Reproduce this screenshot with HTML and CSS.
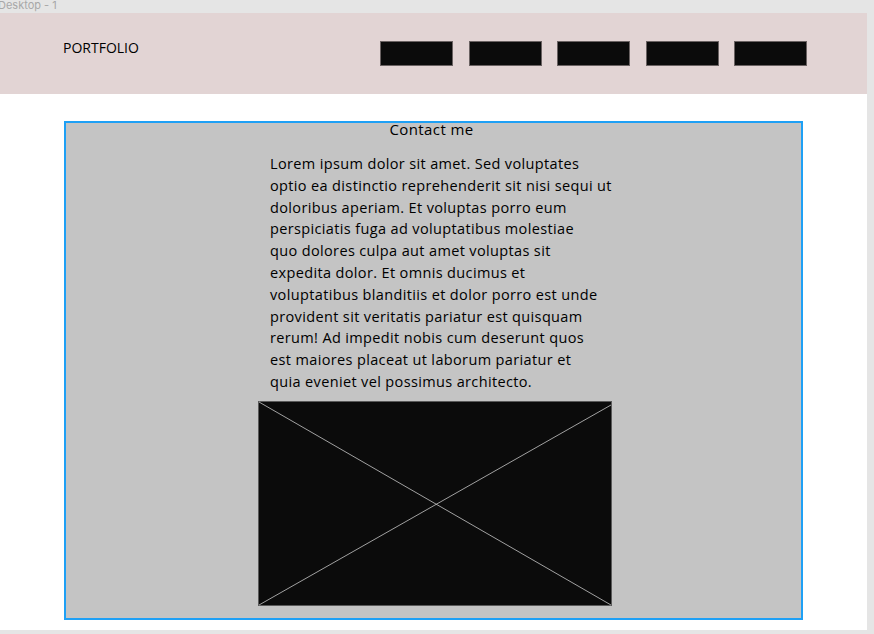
FILE: index.html
```html
<!DOCTYPE html>
<html>
<head>
<meta charset="utf-8">
<link rel="stylesheet" href="styles.css">
</head>
<body>
<div class="label">Desktop - 1</div>
<div class="frame">
  <header class="header">
    <div class="logo">PORTFOLIO</div>
    <nav class="nav">
      <span class="nav-item"></span>
      <span class="nav-item"></span>
      <span class="nav-item"></span>
      <span class="nav-item"></span>
      <span class="nav-item"></span>
    </nav>
  </header>
  <main class="main">
    <section class="contact">
      <h2 class="title">Contact me</h2>
      <p class="text">Lorem ipsum dolor sit amet. Sed voluptates<br>optio ea distinctio reprehenderit sit nisi sequi ut<br>doloribus aperiam. Et voluptas porro eum<br>perspiciatis fuga ad voluptatibus molestiae<br>quo dolores culpa aut amet voluptas sit<br>expedita dolor. Et omnis ducimus et<br>voluptatibus blanditiis et dolor porro est unde<br>provident sit veritatis pariatur est quisquam<br>rerum! Ad impedit nobis cum deserunt quos<br>est maiores placeat ut laborum pariatur et<br>quia eveniet vel possimus architecto.</p>
      <div class="image">
        <svg width="354" height="205" viewBox="0 0 354 205" preserveAspectRatio="none">
          <rect x="0.5" y="0.5" width="353" height="204" fill="#0b0b0b" stroke="#5a5a5a"/>
          <line x1="1" y1="1" x2="353" y2="204" stroke="#c8c8c8" stroke-width="0.8"/>
          <line x1="353" y1="4" x2="1" y2="204" stroke="#c8c8c8" stroke-width="0.8"/>
        </svg>
      </div>
    </section>
  </main>
</div>
</body>
</html>
```

FILE: styles.css
```css
html, body {
  margin: 0;
  padding: 0;
}
body {
  background: #e5e5e5;
  font-family: "Open Sans", "Noto Sans", sans-serif;
  color: #000;
  width: 874px;
  height: 634px;
  overflow: hidden;
}
.label {
  height: 13px;
  font-size: 11px;
  line-height: 11px;
  color: #a8a8a8;
  margin-left: -2px;
  font-family: "Inter", "Noto Sans", sans-serif;
  white-space: nowrap;
}
.frame {
  width: 867px;
  height: 617px;
  background: #fff;
}
.header {
  height: 81px;
  background: #e2d4d4;
  display: flex;
  align-items: flex-start;
  justify-content: space-between;
  padding: 0 60px 0 63px;
  box-sizing: border-box;
}
.logo {
  font-size: 14px;
  line-height: 20px;
  margin-top: 25px;
}
.nav {
  display: flex;
  gap: 15.5px;
  margin-top: 28px;
}
.nav-item {
  display: block;
  width: 71px;
  height: 23px;
  background: #0b0b0b;
  border: 1px solid #6a6262;
}
.main {
  padding: 27px 0 0 64px;
}
.contact {
  width: 739px;
  height: 499px;
  box-sizing: border-box;
  border: 2px solid #1ea0f5;
  background: #c4c4c4;
  display: flex;
  flex-direction: column;
}
.title {
  margin: -4px 0 0 -4px;
  font-size: 15px;
  font-weight: 400;
  line-height: 20px;
  letter-spacing: 0.4px;
  text-align: center;
}
.text {
  margin: 14px 0 0 204px;
  font-size: 14.5px;
  line-height: 21.8px;
  letter-spacing: 0.36px;
}
.image {
  margin: 8px 0 0 192px;
  height: 205px;
}
.image svg {
  display: block;
}
```
